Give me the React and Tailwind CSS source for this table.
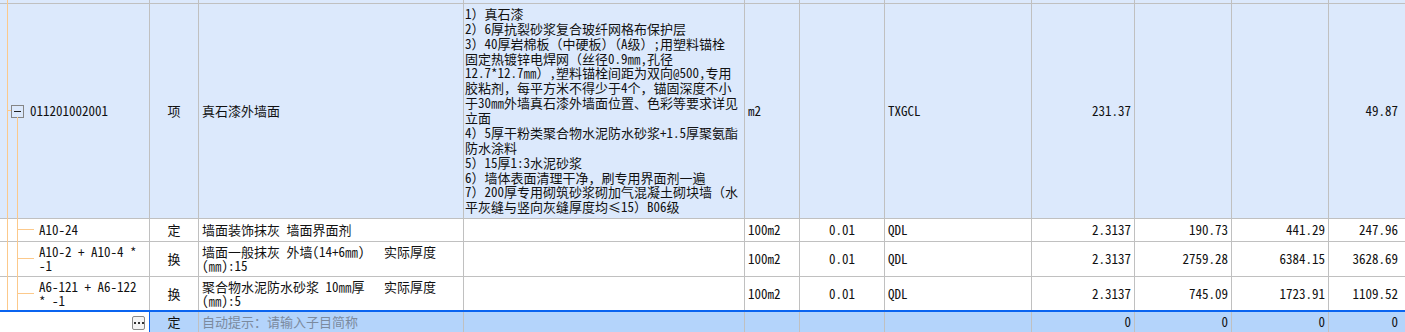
import React from "react"

const W = [
  "w-[150px]",
  "w-[49px]",
  "w-[265px]",
  "w-[281px]",
  "w-[55px]",
  "w-[85px]",
  "w-[147px]",
  "w-[103px]",
  "w-[97px]",
  "w-[97px]",
  "flex-1",
]

// alignment per column: l = left, c = center, r = right
const ALIGN = ["l", "c", "l", "l", "l", "c", "l", "r", "r", "r", "r"]

const alignClass = {
  l: "justify-start pl-[3px]",
  c: "justify-center",
  r: "justify-end pr-[3px]",
}

const Cell = ({ i, children, className = "" }) => (
  <div
    className={`flex items-center shrink-0 border-r border-[#c0c0c0] ${W[i]} ${
      i === 10 ? "justify-end pr-[7px] border-r-0" : alignClass[ALIGN[i]]
    } ${className}`}
  >
    {children}
  </div>
)

const Lines = ({ lines, leading = "leading-[14px]" }) => (
  <div className={`flex flex-col ${leading}`}>
    {lines.map((l, k) => (
      <div key={k} className="whitespace-pre">
        {l}
      </div>
    ))}
  </div>
)

const features = [
  "1）真石漆",
  "2）6厚抗裂砂浆复合玻纤网格布保护层",
  "3）40厚岩棉板（中硬板）（A级）;用塑料锚栓",
  "固定热镀锌电焊网（丝径0.9㎜,孔径",
  "12.7*12.7㎜）,塑料锚栓间距为双向@500,专用",
  "胶粘剂，每平方米不得少于4个，锚固深度不小",
  "于30㎜外墙真石漆外墙面位置、色彩等要求详见",
  "立面",
  "4）5厚干粉类聚合物水泥防水砂浆+1.5厚聚氨酯",
  "防水涂料",
  "5）15厚1:3水泥砂浆",
  "6）墙体表面清理干净，刷专用界面剂一遍",
  "7）200厚专用砌筑砂浆砌加气混凝土砌块墙（水",
  "平灰缝与竖向灰缝厚度均≤15）B06级",
]

const subRows = [
  {
    h: "h-[23px] border-b",
    code: ["A10-24"],
    name: ["墙面装饰抹灰 墙面界面剂"],
    vals: ["190.73", "441.29", "247.96"],
  },
  {
    h: "h-[35px] border-b",
    code: ["A10-2 + A10-4 *", "-1"],
    name: ["墙面一般抹灰 外墙(14+6㎜)   实际厚度", "(㎜):15"],
    vals: ["2759.28", "6384.15", "3628.69"],
  },
  {
    h: "h-[33px]",
    code: ["A6-121 + A6-122", "* -1"],
    name: ["聚合物水泥防水砂浆 10㎜厚   实际厚度", "(㎜):5"],
    vals: ["745.09", "1723.91", "1109.52"],
  },
]

const TreeLines = () => (
  <svg
    className="absolute left-0 top-0 pointer-events-none"
    width="40"
    height="310"
    viewBox="0 0 40 310"
  >
    <g stroke="#fcc98b" strokeWidth="1" shapeRendering="crispEdges">
      <line x1="7.5" y1="0" x2="7.5" y2="310" />
      <line x1="17.5" y1="117" x2="17.5" y2="310" />
      <line x1="7" y1="110.5" x2="11" y2="110.5" />
      <line x1="17" y1="229.5" x2="34" y2="229.5" />
      <line x1="17" y1="258.5" x2="34" y2="258.5" />
      <line x1="17" y1="293.5" x2="34" y2="293.5" />
    </g>
  </svg>
)

export default function App() {
  return (
    <div className="relative w-[1405px] h-[332px] overflow-hidden bg-white text-[13px] text-[#111] font-['Noto_Sans_Mono_CJK_SC','Noto_Sans_CJK_SC',sans-serif]">
      {/* bottom edge of the previous row */}
      <div className="flex h-[4px] border-b border-[#c0c0c0] bg-[#dce9fc]">
        {W.map((_, i) => (
          <Cell key={i} i={i} />
        ))}
      </div>

      {/* bill item row */}
      <div className="flex h-[215px] border-b border-[#c0c0c0] bg-[#dce9fc]">
        <Cell i={0} className="!pl-[11px] gap-[6px]">
          <div className="flex items-center justify-center w-[13px] h-[13px] border border-[#858585]">
            <div className="w-[7px] h-[1px] bg-[#222]" />
          </div>
          <span>011201002001</span>
        </Cell>
        <Cell i={1}>项</Cell>
        <Cell i={2}>真石漆外墙面</Cell>
        <Cell i={3} className="!pl-[1px]">
          <Lines lines={features} leading="leading-[14.87px]" />
        </Cell>
        <Cell i={4}>m2</Cell>
        <Cell i={5} />
        <Cell i={6}>TXGCL</Cell>
        <Cell i={7}>231.37</Cell>
        <Cell i={8} />
        <Cell i={9} />
        <Cell i={10}>49.87</Cell>
      </div>

      {/* sub items */}
      {subRows.map((r, k) => (
        <div key={k} className={`flex border-[#c0c0c0] bg-white ${r.h}`}>
          <Cell i={0} className="!pl-[39px]">
            <Lines lines={r.code} />
          </Cell>
          <Cell i={1}>{k === 0 ? "定" : "换"}</Cell>
          <Cell i={2}>
            <Lines lines={r.name} />
          </Cell>
          <Cell i={3} />
          <Cell i={4}>100m2</Cell>
          <Cell i={5}>0.01</Cell>
          <Cell i={6}>QDL</Cell>
          <Cell i={7}>2.3137</Cell>
          <Cell i={8}>{r.vals[0]}</Cell>
          <Cell i={9}>{r.vals[1]}</Cell>
          <Cell i={10}>{r.vals[2]}</Cell>
        </div>
      ))}

      {/* new entry row */}
      <div className="flex h-[22px] border-t-2 border-[#0a64f0]">
        <Cell i={0} className="bg-white !border-[#0a64f0] !pr-[4px] !justify-end">
          <div className="flex items-center justify-center gap-[2px] w-[13px] h-[14px] mt-[2px] rounded-[2px] border border-[#8a8a8a] bg-[#f4f4f4]">
            <span className="w-[2px] h-[2px] bg-[#333]" />
            <span className="w-[2px] h-[2px] bg-[#333]" />
            <span className="w-[2px] h-[2px] bg-[#333]" />
          </div>
        </Cell>
        <div className="flex flex-1 bg-[#b4d4fb]">
          <Cell i={1}>定</Cell>
          <Cell i={2} className="text-[#7b8a9e]">
            自动提示：请输入子目简称
          </Cell>
          <Cell i={3} />
          <Cell i={4} />
          <Cell i={5} />
          <Cell i={6} />
          <Cell i={7}>0</Cell>
          <Cell i={8}>0</Cell>
          <Cell i={9}>0</Cell>
          <Cell i={10}>0</Cell>
        </div>
      </div>

      <TreeLines />
    </div>
  )
}
